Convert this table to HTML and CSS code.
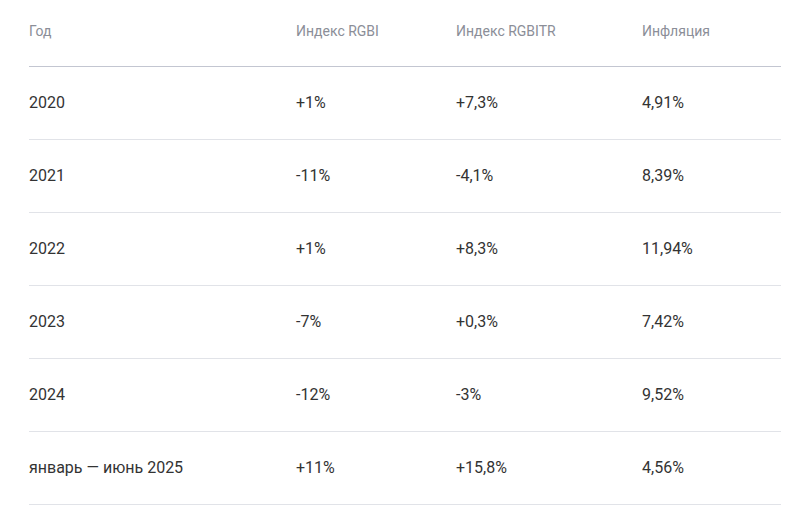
FILE: index.html
```html
<!DOCTYPE html>
<html lang="ru">
<head>
<meta charset="utf-8">
<link rel="stylesheet" href="styles.css">
</head>
<body>
<div class="wrap">
<table class="data">
  <colgroup>
    <col class="c1"><col class="c2"><col class="c3"><col class="c4">
  </colgroup>
  <thead>
    <tr><th>Год</th><th>Индекс RGBI</th><th>Индекс RGBITR</th><th>Инфляция</th></tr>
  </thead>
  <tbody>
    <tr><td>2020</td><td>+1%</td><td>+7,3%</td><td>4,91%</td></tr>
    <tr><td>2021</td><td>-11%</td><td>-4,1%</td><td>8,39%</td></tr>
    <tr><td>2022</td><td>+1%</td><td>+8,3%</td><td>11,94%</td></tr>
    <tr><td>2023</td><td>-7%</td><td>+0,3%</td><td>7,42%</td></tr>
    <tr><td>2024</td><td>-12%</td><td>-3%</td><td>9,52%</td></tr>
    <tr><td>январь — июнь 2025</td><td>+11%</td><td>+15,8%</td><td>4,56%</td></tr>
  </tbody>
</table>
</div>
</body>
</html>
```
FILE: styles.css
```css
html, body {
  margin: 0;
  padding: 0;
  background: #ffffff;
}
body {
  font-family: Roboto, "Liberation Sans", sans-serif;
}
.wrap {
  padding: 0 13px 0 29px;
}
.data {
  width: 752px;
  border-collapse: collapse;
  table-layout: fixed;
}
.c1 { width: 267px; }
.c2 { width: 160px; }
.c3 { width: 186px; }
.c4 { width: 139px; }
.data th {
  text-align: left;
  font-weight: 400;
  font-size: 14px;
  line-height: 16px;
  color: #8b8e98;
  padding: 23px 0 27px;
  height: 16px;
  vertical-align: middle;
  border-bottom: 1px solid #c3c6d1;
}
.data td {
  font-size: 16px;
  line-height: 18px;
  color: #333333;
  height: 72px;
  padding: 0;
  vertical-align: middle;
  border-bottom: 1px solid #e1e3e8;
}
```
